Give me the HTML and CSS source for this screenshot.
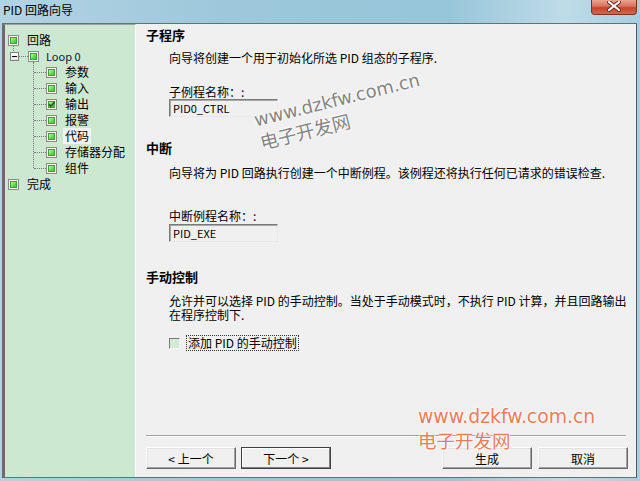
FILE: index.html
```html
<!DOCTYPE html>
<html lang="zh-CN">
<head>
    <meta charset="UTF-8">
    <title>PID 回路向导</title>
    <link rel="stylesheet" href="styles.css">
</head>
<body>
<div class="window">
    <!-- 标题栏 -->
    <div class="titlebar">
        <span class="title">PID 回路向导</span>
        <div class="close-btn">
            <svg width="14" height="11" viewBox="0 0 14 11">
                <path d="M2 1 L12 9 M12 1 L2 9" stroke="#6a2a20" stroke-width="4" stroke-linecap="round"/>
                <path d="M2 1 L12 9 M12 1 L2 9" stroke="#ffffff" stroke-width="2.2" stroke-linecap="round"/>
            </svg>
        </div>
    </div>

    <div class="client">
        <!-- 左侧导航树 -->
        <div class="tree">
            <div class="row">
                <span class="cb"></span><span class="label">回路</span>
            </div>
            <div class="row loop">
                <span class="minus"></span><span class="hline short"></span>
                <span class="cb"></span><span class="label latin">Loop 0</span>
            </div>
            <div class="children">
                <div class="row child"><span class="hline"></span><span class="cb"></span><span class="label">参数</span></div>
                <div class="row child"><span class="hline"></span><span class="cb"></span><span class="label">输入</span></div>
                <div class="row child">
                    <span class="hline"></span>
                    <span class="cb checked">
                        <svg class="tick" width="11" height="11" viewBox="0 0 11 11">
                            <path d="M3 5 L4.8 7.2 L8.6 3" fill="none" stroke="#1d5e1d" stroke-width="1.6"/>
                        </svg>
                    </span>
                    <span class="label">输出</span>
                </div>
                <div class="row child"><span class="hline"></span><span class="cb"></span><span class="label">报警</span></div>
                <div class="row child"><span class="hline"></span><span class="cb"></span><span class="label current">代码</span></div>
                <div class="row child"><span class="hline"></span><span class="cb"></span><span class="label">存储器分配</span></div>
                <div class="row child"><span class="hline"></span><span class="cb"></span><span class="label">组件</span></div>
            </div>
            <div class="row">
                <span class="cb"></span><span class="label">完成</span>
            </div>
        </div>

        <!-- 右侧内容 -->
        <div class="main">
            <h2 class="sec-title first">子程序</h2>
            <p class="desc">向导将创建一个用于初始化所选 PID 组态的子程序.</p>
            <div class="field">
                <div class="field-label">子例程名称：:</div>
                <div class="textbox">PID0_CTRL</div>
            </div>

            <h2 class="sec-title">中断</h2>
            <p class="desc desc-int">向导将为 PID 回路执行创建一个中断例程。该例程还将执行任何已请求的错误检查.</p>
            <div class="field field-int">
                <div class="field-label">中断例程名称：:</div>
                <div class="textbox">PID_EXE</div>
            </div>

            <h2 class="sec-title sec-manual">手动控制</h2>
            <p class="desc desc-manual">允许并可以选择 PID 的手动控制。当处于手动模式时，不执行 PID 计算，并且回路输出<br>在程序控制下.</p>
            <div class="check-row">
                <span class="check"></span>
                <span class="check-label">添加 PID 的手动控制</span>
            </div>

            <div class="footer">
                <div class="sep"></div>
                <div class="buttons">
                    <button class="btn">&lt; 上一个</button>
                    <button class="btn default">下一个 &gt;</button>
                    <span class="spacer"></span>
                    <button class="btn">生成</button>
                    <button class="btn">取消</button>
                </div>
            </div>
        </div>
    </div>

    <!-- 水印 -->
    <div class="wm wm-gray">
        <div class="wm-url">www.dzkfw.com.cn</div>
        <div class="wm-name">电子开发网</div>
    </div>
    <div class="wm wm-orange">
        <div class="wm-url">www.dzkfw.com.cn</div>
        <div class="wm-name">电子开发网</div>
    </div>
</div>
</body>
</html>
```

FILE: styles.css
```css
body {
    margin: 0;
    font-family: "Noto Sans CJK SC", "Liberation Sans", sans-serif;
    font-size: 12px;
    color: #000;
}
.window {
    position: relative;
    width: 640px;
    height: 481px;
    display: flex;
    flex-direction: column;
    background: linear-gradient(90deg, #b2d3e3 0%, #9dc8db 35%, #97c5d9 70%, #bedbe8 88%, #a6cfe0 100%);
    overflow: hidden;
}
.titlebar {
    height: 23px;
    display: flex;
    justify-content: space-between;
    align-items: flex-start;
}
.title {
    margin: 2px 0 0 3px;
    line-height: 16px;
}
.close-btn {
    width: 46px;
    height: 15px;
    margin-right: 3px;
    box-sizing: border-box;
    border: 1px solid #7c3326;
    border-top: none;
    border-radius: 0 0 4px 4px;
    background: linear-gradient(180deg, #e9a593 0%, #d8705a 45%, #c4442c 55%, #d8674e 100%);
    display: flex;
    justify-content: center;
    align-items: flex-start;
    padding-top: 1px;
}
.client {
    flex: 1;
    margin: 0 3px 3px 2px;
    display: flex;
    background: #f0f0f0;
    border: 1px solid #6e6e6e;
    border-right-color: #4f5a62;
}

/* 导航树 */
.tree {
    width: 133px;
    box-sizing: border-box;
    background: #cde8d1;
    border-left: 2px solid #6a6a6a;
    border-top: 1px solid #a0a0a0;
    border-right: 1px solid #ffffff;
    padding: 7px 0 0 3px;
}
.row {
    position: relative;
    display: flex;
    align-items: center;
    height: 16px;
}
.label {
    margin-left: 8px;
    line-height: 16px;
    white-space: nowrap;
}
.label.latin {
    margin-left: 7px;
    font-size: 11px;
    color: #10104a;
}
.label.current {
    background: #f2f2f2;
    padding: 0 2px;
    margin-left: 6px;
}
.cb {
    position: relative;
    width: 11px;
    height: 11px;
    flex-shrink: 0;
    box-sizing: border-box;
    border: 1px solid #8a8a8a;
    padding: 1px;
    background: #f6f6f6;
}
.cb::after {
    content: "";
    display: block;
    width: 7px;
    height: 7px;
    box-sizing: border-box;
    border: 1px solid #37a237;
    background: linear-gradient(135deg, #c2f7a6 0%, #5fe04a 55%, #36c436 100%);
}
.cb .tick {
    position: absolute;
    top: -1px;
    left: -1px;
}
.minus {
    width: 9px;
    height: 9px;
    margin-left: 2px;
    box-sizing: border-box;
    border: 1px solid #808080;
    background: linear-gradient(#ffffff, #e4e4e4) no-repeat, #fff;
    position: relative;
}
.minus::after {
    content: "";
    position: absolute;
    left: 1px;
    top: 3px;
    width: 5px;
    border-top: 1px solid #000;
}
.hline {
    border-top: 1px dotted #7a7a7a;
    width: 12px;
    margin-left: 26px;
}
.hline.short {
    width: 9px;
    margin-left: 0;
}
.loop::before {
    content: "";
    position: absolute;
    left: 5px;
    top: -2px;
    height: 5px;
    border-left: 1px dotted #7a7a7a;
}
.children {
    position: relative;
}
.children::before {
    content: "";
    position: absolute;
    left: 25px;
    top: -2px;
    bottom: 8px;
    border-left: 1px dotted #7a7a7a;
}

/* 右侧内容 */
.main {
    flex: 1;
    display: flex;
    flex-direction: column;
    padding: 0 8px 8px 10px;
}
.sec-title {
    margin: 23px 0 0 0;
    font-size: 13px;
    font-weight: bold;
    line-height: 16px;
}
.sec-title.first {
    margin-top: 3px;
}
.sec-title.sec-manual {
    margin-top: 27px;
}
.desc {
    margin: 8px 0 0 0;
    padding-left: 23px;
    line-height: 13px;
    white-space: nowrap;
}
.desc-int {
    margin-top: 10px;
}
.desc-manual {
    margin-top: 9px;
    line-height: 13.5px;
}
.field {
    margin-top: 21px;
    padding-left: 23px;
}
.field-int {
    margin-top: 30px;
}
.field-label {
    line-height: 13px;
}
.textbox {
    width: 109px;
    height: 18px;
    margin-top: 1px;
    box-sizing: border-box;
    border: 1px solid;
    border-color: #7a7a7a #e8e8e8 #e8e8e8 #7a7a7a;
    box-shadow: inset 1px 1px 0 #a8a8a8;
    padding-left: 3px;
    font-size: 11px;
    line-height: 16px;
    color: #000;
}
.field-int .textbox {
    margin-top: 2px;
}
.check-row {
    margin-top: 14px;
    padding-left: 23px;
    height: 16px;
    display: flex;
    align-items: center;
}
.check {
    width: 11px;
    height: 11px;
    box-sizing: border-box;
    border: 1px solid;
    border-color: #7a7a7a #f4f4f4 #f4f4f4 #7a7a7a;
    background: #d3ead3;
}
.check-label {
    margin-left: 6px;
    border: 1px dotted #333;
    padding: 0 1px;
    line-height: 14px;
}
.footer {
    margin-top: auto;
}
.sep {
    border-top: 1px solid #a0a0a0;
    border-bottom: 1px solid #ffffff;
    margin-right: 2px;
}
.buttons {
    display: flex;
    margin-top: 10px;
    gap: 5px;
}
.spacer {
    flex: 1;
}
.btn {
    width: 90px;
    height: 22px;
    padding: 0;
    box-sizing: border-box;
    font-family: inherit;
    font-size: 12px;
    color: #000;
    background: #f0f0f0;
    border: 1px solid;
    border-color: #ffffff #696969 #696969 #ffffff;
    box-shadow: inset -1px -1px 0 #a0a0a0, inset 1px 1px 0 #e3e3e3;
}
.btn.default {
    border: 1px solid #404040;
    box-shadow: inset -1px -1px 0 #808080, inset 1px 1px 0 #ffffff;
}
.buttons .btn:last-child {
    margin-left: 1px;
}

/* 水印 */
.wm {
    position: absolute;
    pointer-events: none;
    font-family: "DejaVu Sans", "Noto Sans CJK SC", sans-serif;
    white-space: nowrap;
}
.wm-url {
    font-size: 18.8px;
    line-height: 21px;
}
.wm-name {
    font-family: "Noto Sans CJK SC", sans-serif;
    font-size: 18.5px;
    line-height: 21px;
    margin-top: 3px;
}
.wm-gray {
    left: 252px;
    top: 110px;
    color: #858585;
    transform: rotate(-14deg);
    transform-origin: 0 0;
    text-shadow: 0 0 2px #fff, 0 0 2px #fff, 0 0 3px #fff;
}
.wm-gray .wm-url {
    font-size: 18px;
}
.wm-gray .wm-name {
    margin-top: 2px;
}
.wm-orange {
    left: 418px;
    top: 406px;
    color: #ef7c58;
    text-shadow: 0 0 2px #fff, 0 0 2px #fff, 0 0 3px #fff;
}
```
